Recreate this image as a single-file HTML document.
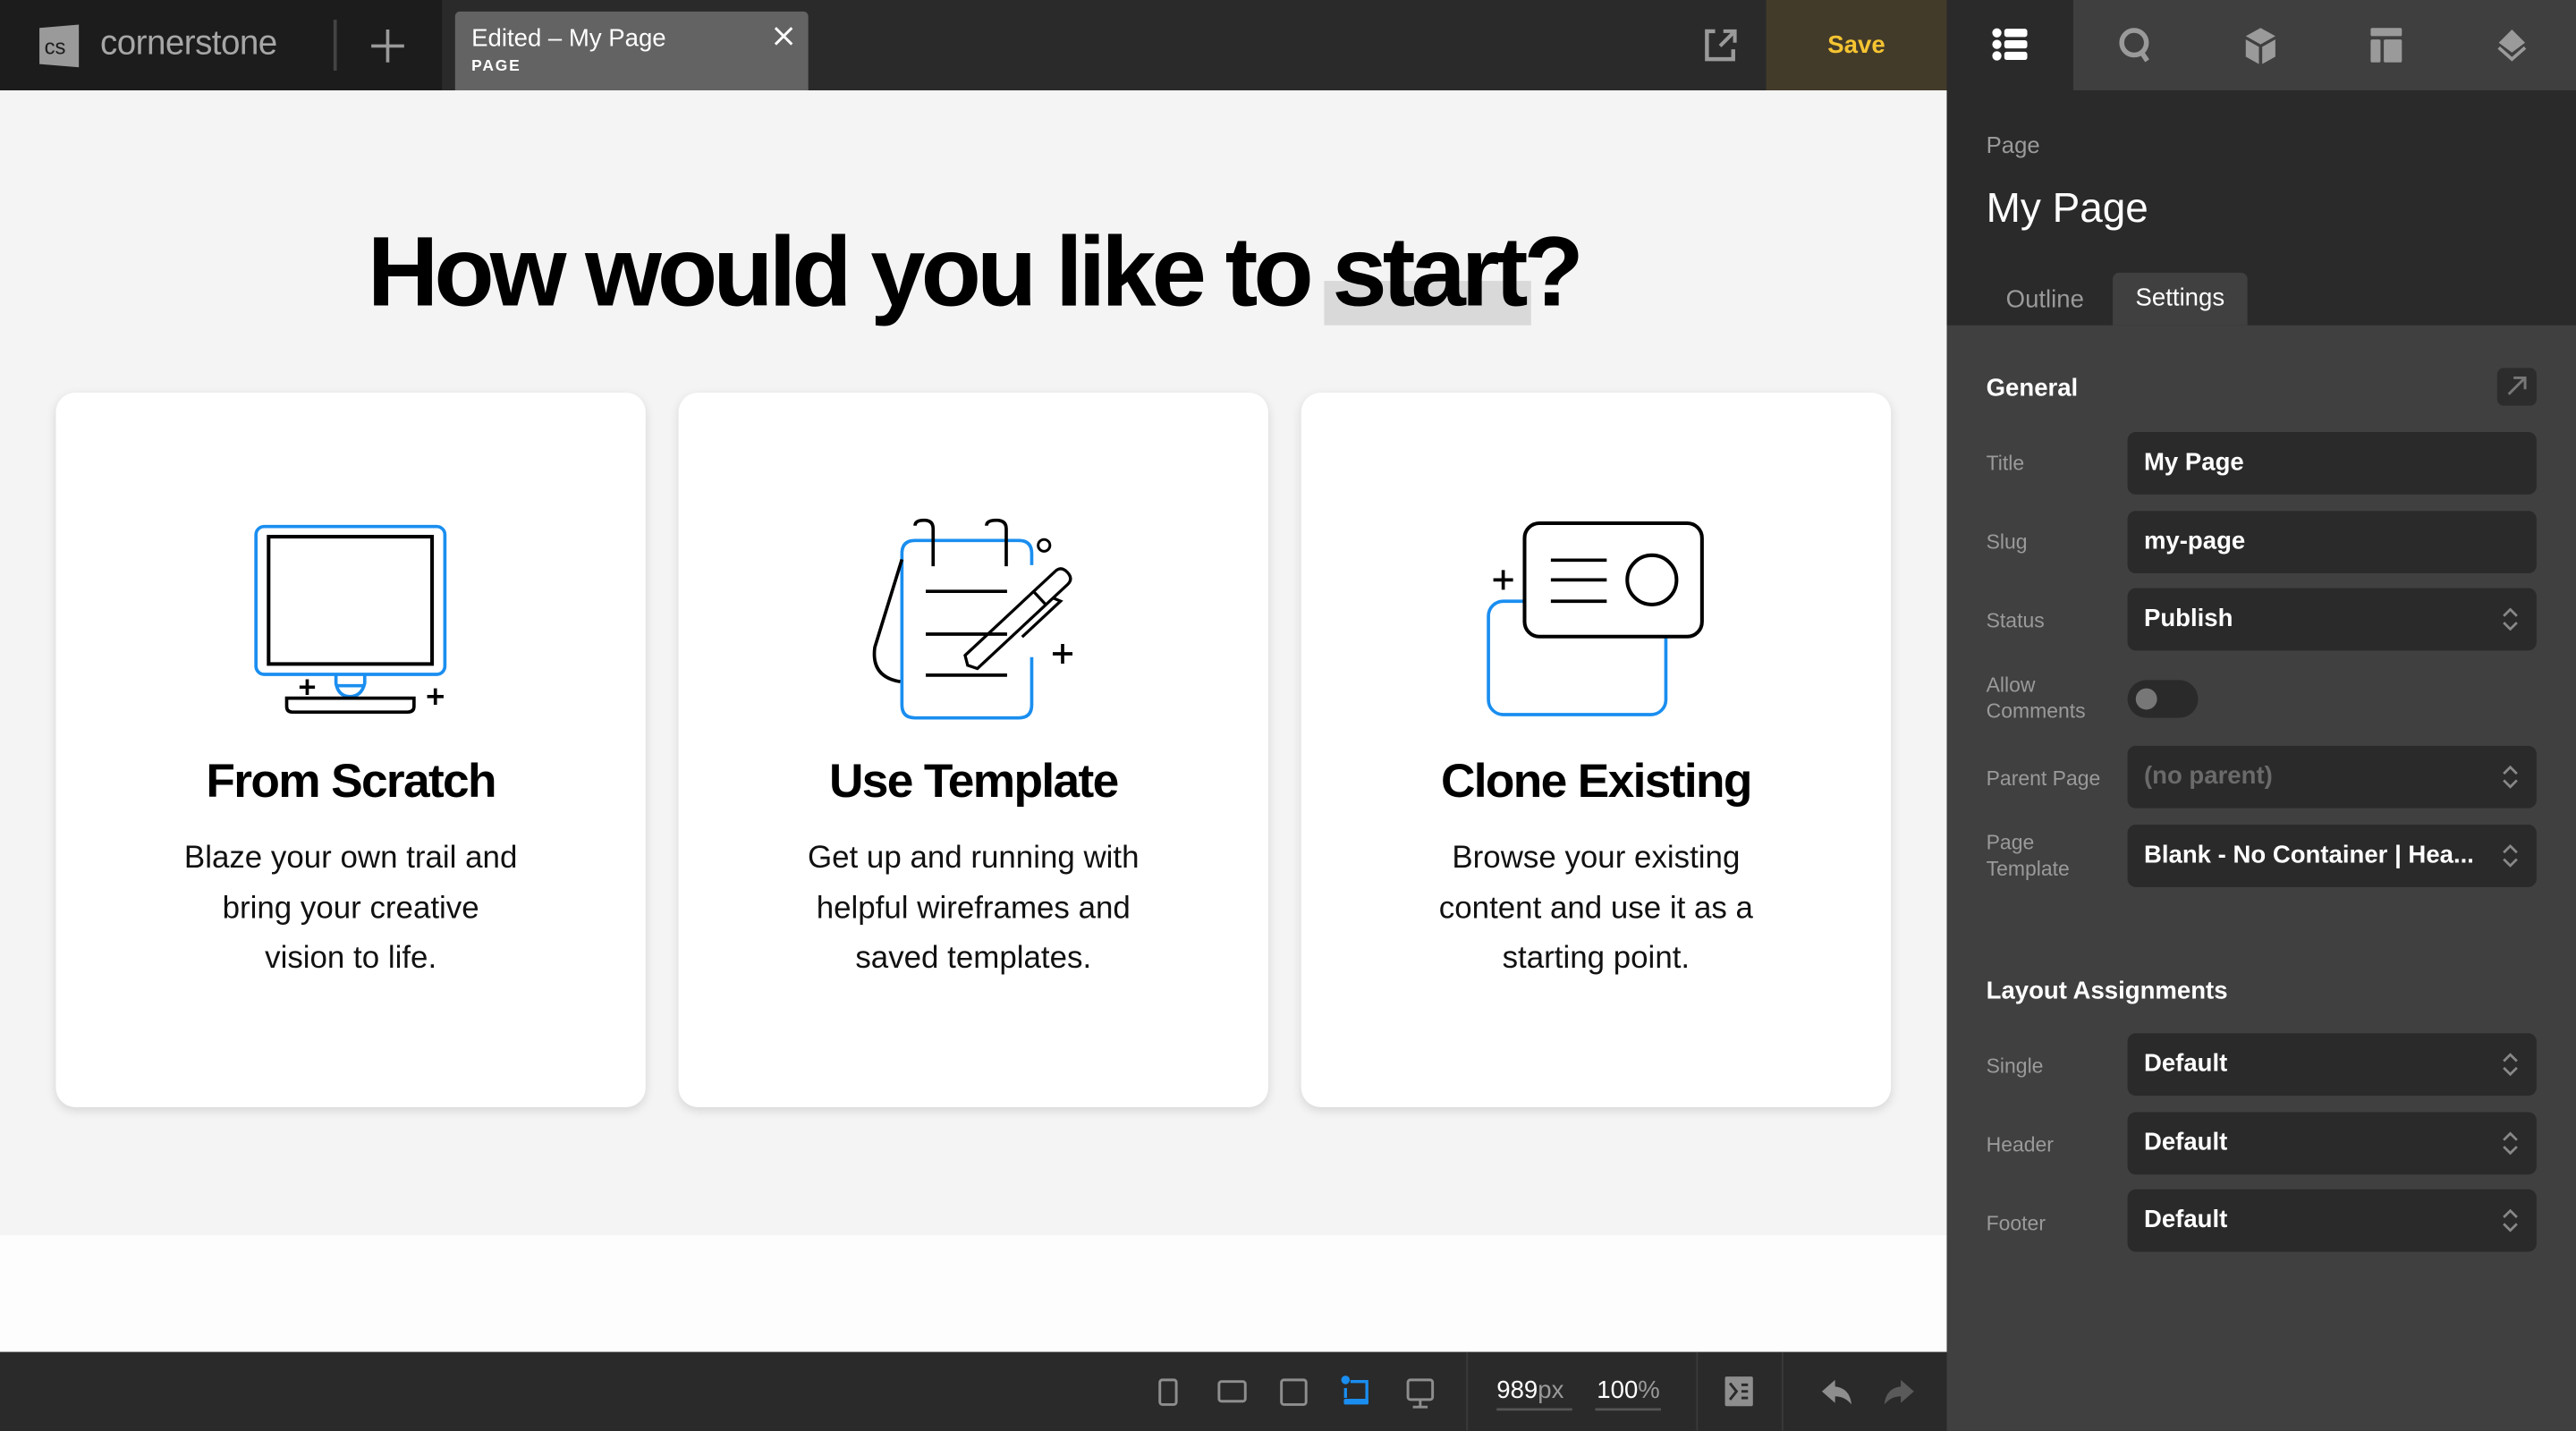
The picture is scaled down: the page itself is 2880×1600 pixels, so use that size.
<!DOCTYPE html>
<html><head><meta charset="utf-8"><style>
*{box-sizing:border-box;margin:0;padding:0}
html,body{width:2880px;height:1600px;overflow:hidden;background:#2a2a2a}
#w{position:absolute;left:0;top:0;width:1568px;height:871.2px;transform:scale(1.836735);transform-origin:0 0;font-family:"Liberation Sans",sans-serif;overflow:hidden}
.a{position:absolute}
.lbl{position:absolute;left:1209px;color:#9a9a9a;font-size:12.5px;line-height:16px}
.inp{position:absolute;left:1295px;width:249px;height:38px;background:#2a2a2a;border-radius:5px;color:#fff;font-weight:bold;font-size:15px;line-height:38px;padding-left:10px}
.chev{position:absolute;right:11px;top:12px}
.card{position:absolute;top:239px;width:359px;height:435px;background:#fff;border-radius:12px;box-shadow:0 2px 6px rgba(0,0,0,.12)}
.card h2{position:absolute;top:221px;left:0;right:0;text-align:center;font-size:29px;letter-spacing:-.9px;color:#000}
.card p{position:absolute;top:269px;left:0;right:0;text-align:center;font-size:19px;line-height:30.5px;color:#111}
</style></head><body><div id="w">
<!-- top bar -->
<div class="a" style="left:0;top:0;width:1185px;height:55px;background:#2a2a2a"></div>
<div class="a" style="left:0;top:0;width:269px;height:55px;background:#1c1c1c"></div>
<svg class="a" style="left:22px;top:14px" width="28" height="28" viewBox="0 0 28 28"><path d="M2 3 L26 1 V27 L2 25 Z" fill="#9a9a9a"/><text x="5" y="19" font-family="Liberation Sans" font-size="13" fill="#1c1c1c">cs</text></svg>
<div class="a" style="left:61px;top:15px;color:#a6a6a6;font-size:21px;letter-spacing:-.3px">cornerstone</div>
<div class="a" style="left:203px;top:12px;width:2px;height:31px;background:#444"></div>
<svg class="a" style="left:225px;top:17px" width="22" height="22"><path d="M11 1V21M1 11H21" stroke="#9a9a9a" stroke-width="2"/></svg>
<div class="a" style="left:277px;top:7px;width:215px;height:48px;background:#636363;border-radius:3px 3px 0 0"></div>
<div class="a" style="left:287px;top:15px;color:#fff;font-size:15px">Edited – My Page</div>
<div class="a" style="left:287px;top:35px;color:#fff;font-size:9.5px;font-weight:bold;letter-spacing:1px">PAGE</div>
<svg class="a" style="left:471px;top:16px" width="12" height="12"><path d="M1 1L11 11M11 1L1 11" stroke="#fff" stroke-width="1.6"/></svg>
<svg class="a" style="left:1036px;top:16px" width="22" height="22"><path d="M8 3H3V20H19V14" fill="none" stroke="#9a9a9a" stroke-width="2.4"/><path d="M11 12L19 4M13 3H20V10" fill="none" stroke="#9a9a9a" stroke-width="2.2"/></svg>
<div class="a" style="left:1075px;top:0;width:110px;height:55px;background:#433b29;color:#f5c431;font-weight:bold;font-size:15px;text-align:center;line-height:55px">Save</div>
<div class="a" style="left:1185px;top:0;width:383px;height:55px;background:#3f3f3f"></div>
<div class="a" style="left:1185px;top:0;width:77px;height:55px;background:#2a2a2a"></div>
<svg class="a" style="left:1212px;top:16px" width="24" height="24"><g fill="#fff"><circle cx="3.5" cy="4" r="2.8"/><circle cx="3.5" cy="11" r="2.8"/><circle cx="3.5" cy="18" r="2.8"/><rect x="8" y="1.5" width="14" height="5" rx="1.5"/><rect x="8" y="8.5" width="14" height="5" rx="1.5"/><rect x="8" y="15.5" width="14" height="5" rx="1.5"/></g></svg>
<svg class="a" style="left:1289px;top:16px" width="24" height="24"><circle cx="10" cy="10" r="7.5" fill="none" stroke="#9a9a9a" stroke-width="3"/><path d="M14 15L18 21" stroke="#9a9a9a" stroke-width="3"/></svg>
<svg class="a" style="left:1365px;top:16px" width="24" height="24"><path d="M11 1L20 6L11 11L2 6Z" fill="#9a9a9a"/><path d="M2 8L10 12.5V23L2 18.5Z M20 8L12 12.5V23L20 18.5Z" fill="#9a9a9a"/></svg>
<svg class="a" style="left:1441px;top:16px" width="24" height="24"><rect x="2" y="1" width="19" height="5" rx="1" fill="#9a9a9a"/><rect x="2" y="8" width="6" height="14" rx="1" fill="#9a9a9a"/><rect x="10" y="8" width="11" height="14" rx="1" fill="#9a9a9a"/></svg>
<svg class="a" style="left:1518px;top:16px" width="24" height="24"><path d="M11 2L19 10L11 16L3 10Z" fill="#9a9a9a"/><path d="M3 13L11 20L19 13" fill="none" stroke="#9a9a9a" stroke-width="2"/></svg>
<!-- canvas -->
<div class="a" style="left:0;top:55px;width:1185px;height:768px;background:#f4f4f4"></div>
<div class="a" style="left:0;top:752px;width:1185px;height:71px;background:#fdfdfd"></div>
<div class="a" style="left:806px;top:171px;width:126px;height:27px;background:#d9d9d9"></div>
<div class="a" style="left:0;top:128px;width:1185px;text-align:center;font-size:60px;font-weight:bold;letter-spacing:-2.7px;color:#000;line-height:76px">How would you like to start?</div>
<div class="card" style="left:34px"><h2>From Scratch</h2><p>Blaze your own trail and<br>bring your creative<br>vision to life.</p></div>
<div class="card" style="left:413px"><h2>Use Template</h2><p>Get up and running with<br>helpful wireframes and<br>saved templates.</p></div>
<div class="card" style="left:792px"><h2>Clone Existing</h2><p>Browse your existing<br>content and use it as a<br>starting point.</p></div>
<svg class="a" style="left:0;top:0" width="1185" height="500" fill="none" stroke-width="2">
<rect x="155.8" y="320.5" width="115" height="90" rx="5" stroke="#1a8ef0"/>
<rect x="163.5" y="326.7" width="99.5" height="77.5" stroke="#000" stroke-width="2.2"/>
<path d="M204.5 411V416Q206 424 213 424Q220 424 222 416V411M205 417.4H222" stroke="#1a8ef0"/>
<path d="M174.5 425H252V430Q252 433.5 248 433.5H178Q174.5 433.5 174.5 430Z" stroke="#000"/>
<path d="M187 413.5V423M182.3 418.3H191.7M265 419V429M260 424H270" stroke="#000"/>
<path d="M628 344V337Q628 329 620 329H557Q549 329 549 337V429Q549 437 557 437H620Q628 437 628 429V400" stroke="#1a8ef0"/>
<path d="M549 340.5L532.5 394Q530 412 548 415" stroke="#000"/>
<path d="M557 320Q557 316.7 562.5 316.7Q568 316.7 568 322V344.7M600.5 320Q600.5 316.7 606.5 316.7Q612.5 316.7 612.5 322V344.7" stroke="#000"/>
<path d="M563.5 360H613M563.5 386H613M563.5 411H613" stroke="#000"/>
<circle cx="635.5" cy="332" r="3.6" stroke="#000" stroke-width="1.6"/>
<path d="M646.8 392V404M640.8 398H652.8" stroke="#000"/>
<g transform="translate(589 405) rotate(-43)" stroke="#000" stroke-width="1.8"><path d="M0 0L3 -5.5H78Q83 -5.5 83 0Q83 5.5 78 5.5H3Z M3 -5.5L8 -5.5 M60 -5.5V5.5 M66 5.5L68 10L36 10"/></g>
<rect x="906" y="366" width="108" height="69" rx="9" stroke="#1a8ef0"/>
<rect x="928" y="318.5" width="108" height="69" rx="9" stroke="#000" fill="#fff" stroke-width="2.2"/>
<path d="M944 341H978M944 353H978M944 366H978" stroke="#000"/>
<circle cx="1005.5" cy="353" r="15" stroke="#000" stroke-width="2.2"/>
<path d="M915 347V359M909 353H921" stroke="#000"/>
</svg>
<!-- bottom bar -->
<div class="a" style="left:0;top:823px;width:1185px;height:48.2px;background:#2a2a2a"></div>
<svg class="a" style="left:690px;top:823px" width="495" height="48" fill="none" stroke="#8e8e8e" stroke-width="1.6">
<rect x="16" y="17" width="10" height="15" rx="1.5"/>
<rect x="52" y="18" width="16" height="12" rx="1.5"/>
<rect x="90" y="17" width="15" height="15" rx="1.5"/>
<circle cx="129" cy="17" r="2.6" fill="#1a8ef0" stroke="none"/><path d="M132 18H142V29M129 22V28" stroke="#1a8ef0" stroke-width="1.8"/><rect x="128" y="28.5" width="15" height="3.5" rx="1" fill="#1a8ef0" stroke="none"/>
<rect x="167" y="17" width="15" height="12" rx="1.5"/><path d="M174.5 29V33M170 33.5H179"/>
<path d="M203 0V48M343 0V48M395 0V48" stroke="#3a3a3a" stroke-width="1"/>
<path d="M221 35H267M281 35H321" stroke="#555" stroke-width="1.5"/>
<rect x="360" y="15" width="17" height="18" rx="1" fill="#8e8e8e" stroke="none"/><path d="M363 19L367 24L363 29M370 20H374M370 24H374M370 28H374" stroke="#2a2a2a" stroke-width="1.6"/>
<path d="M419 24L427 17V21Q436 22 437 32Q433 27 427 27V31Z" fill="#8e8e8e" stroke="none"/>
<path d="M475 24L467 17V21Q458 22 457 32Q461 27 467 27V31Z" fill="#5a5a5a" stroke="none"/>
</svg>
<div class="a" style="left:911px;top:838px;color:#fff;font-size:15px">989<span style="color:#9a9a9a">px</span></div>
<div class="a" style="left:972px;top:838px;color:#fff;font-size:15px">100<span style="color:#9a9a9a">%</span></div>
<!-- right panel -->
<div class="a" style="left:1185px;top:55px;width:383px;height:817px;background:#404040"></div>
<div class="a" style="left:1185px;top:55px;width:383px;height:143px;background:#2a2a2a"></div>
<div class="a" style="left:1209px;top:80px;color:#9a9a9a;font-size:14px">Page</div>
<div class="a" style="left:1209px;top:113px;color:#fff;font-size:25px">My Page</div>
<div class="a" style="left:1221px;top:174px;color:#9a9a9a;font-size:15px">Outline</div>
<div class="a" style="left:1286px;top:166px;width:82px;height:32px;background:#404040;border-radius:4px 4px 0 0;color:#fff;font-size:15px;text-align:center;line-height:32px">Settings</div>
<div class="a" style="left:1209px;top:228px;color:#fff;font-size:15px;font-weight:bold">General</div>
<div class="a" style="left:1520px;top:224px;width:24px;height:23px;background:#2c2c2c;border-radius:4px"></div>
<svg class="a" style="left:1520px;top:224px" width="24" height="23"><path d="M7 16L17 6M10 6H17V13" fill="none" stroke="#777" stroke-width="1.6"/></svg>
<div class="lbl" style="top:274px">Title</div>
<div class="inp" style="top:263px">My Page</div>
<div class="lbl" style="top:322px">Slug</div>
<div class="inp" style="top:311px">my-page</div>
<div class="lbl" style="top:370px">Status</div>
<div class="inp" style="top:358px">Publish<svg class="chev" width="10" height="14"><path d="M1 5L5 1L9 5M1 9L5 13L9 9" fill="none" stroke="#888" stroke-width="1.5"/></svg></div>
<div class="lbl" style="top:409px">Allow<br>Comments</div>
<div class="a" style="left:1295px;top:414px;width:43px;height:23px;background:#2a2a2a;border-radius:12px"></div>
<div class="a" style="left:1300px;top:419px;width:13px;height:13px;background:#777;border-radius:50%"></div>
<div class="lbl" style="top:466px">Parent Page</div>
<div class="inp" style="top:454px;color:#6a6a6a">(no parent)<svg class="chev" width="10" height="14"><path d="M1 5L5 1L9 5M1 9L5 13L9 9" fill="none" stroke="#888" stroke-width="1.5"/></svg></div>
<div class="lbl" style="top:505px">Page<br>Template</div>
<div class="inp" style="top:502px">Blank - No Container | Hea...<svg class="chev" width="10" height="14"><path d="M1 5L5 1L9 5M1 9L5 13L9 9" fill="none" stroke="#888" stroke-width="1.5"/></svg></div>
<div class="a" style="left:1209px;top:595px;color:#fff;font-size:15px;font-weight:bold">Layout Assignments</div>
<div class="lbl" style="top:641px">Single</div>
<div class="inp" style="top:629px">Default<svg class="chev" width="10" height="14"><path d="M1 5L5 1L9 5M1 9L5 13L9 9" fill="none" stroke="#888" stroke-width="1.5"/></svg></div>
<div class="lbl" style="top:689px">Header</div>
<div class="inp" style="top:677px">Default<svg class="chev" width="10" height="14"><path d="M1 5L5 1L9 5M1 9L5 13L9 9" fill="none" stroke="#888" stroke-width="1.5"/></svg></div>
<div class="lbl" style="top:737px">Footer</div>
<div class="inp" style="top:724px">Default<svg class="chev" width="10" height="14"><path d="M1 5L5 1L9 5M1 9L5 13L9 9" fill="none" stroke="#888" stroke-width="1.5"/></svg></div>
</div></body></html>
